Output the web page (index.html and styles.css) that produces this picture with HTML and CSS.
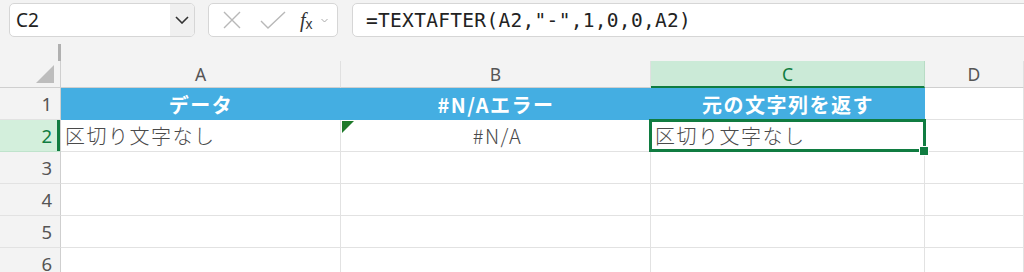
FILE: index.html
```html
<!DOCTYPE html>
<html lang="ja">
<head>
    <meta charset="UTF-8">
    <title>TEXTAFTER</title>
    <link rel="stylesheet" href="styles.css">
</head>
<body>
    <div class="toolbar">
        <div class="name-box">
            <span class="name-value">C2</span>
            <span class="name-drop">
                <svg width="14" height="8" viewBox="0 0 14 8"><path d="M1 1 L7 7 L13 1" fill="none" stroke="#333" stroke-width="1.6"/></svg>
            </span>
        </div>
        <div class="fx-box">
            <svg class="icon" width="20" height="20" viewBox="0 0 20 20"><path d="M2 2 L18 18 M18 2 L2 18" stroke="#b8b8b8" stroke-width="1.4" fill="none"/></svg>
            <svg class="icon" width="26" height="20" viewBox="0 0 26 20"><path d="M1 11 L8 18 L25 2" stroke="#b8b8b8" stroke-width="1.4" fill="none"/></svg>
            <span class="fx-label"><i>f</i><sub>x</sub></span>
            <svg class="small-chev" width="7" height="5" viewBox="0 0 7 5"><path d="M0.5 1 L3.5 4 L6.5 1" stroke="#aaa" stroke-width="1" fill="none"/></svg>
        </div>
        <div class="formula-box">=TEXTAFTER(A2,"-",1,0,0,A2)</div>
    </div>
    <div class="splitter-row">
        <span class="splitter"></span>
    </div>

    <div class="sheet">
        <div class="corner"><span class="corner-tri"></span></div>
        <div class="col-head">A</div>
        <div class="col-head">B</div>
        <div class="col-head active">C</div>
        <div class="col-head">D</div>

        <div class="row-head">1</div>
        <div class="cell title">データ</div>
        <div class="cell title">#N/Aエラー</div>
        <div class="cell title">元の文字列を返す</div>
        <div class="cell"></div>

        <div class="row-head active">2</div>
        <div class="cell">区切り文字なし</div>
        <div class="cell center error">#N/A</div>
        <div class="cell selected">区切り文字なし</div>
        <div class="cell"></div>

        <div class="row-head">3</div>
        <div class="cell"></div><div class="cell"></div><div class="cell"></div><div class="cell"></div>
        <div class="row-head">4</div>
        <div class="cell"></div><div class="cell"></div><div class="cell"></div><div class="cell"></div>
        <div class="row-head">5</div>
        <div class="cell"></div><div class="cell"></div><div class="cell"></div><div class="cell"></div>
        <div class="row-head">6</div>
        <div class="cell"></div><div class="cell"></div><div class="cell"></div><div class="cell"></div>
    </div>
</body>
</html>
```

FILE: styles.css
```css
* {
    margin: 0;
    padding: 0;
    box-sizing: border-box;
}

body {
    width: 1024px;
    height: 272px;
    overflow: hidden;
    background: #f3f3f3;
    font-family: "Noto Sans", "Noto Sans CJK JP", sans-serif;
    color: #444;
}

.toolbar {
    display: flex;
    align-items: stretch;
    height: 37px;
    padding: 3px 0 0 9px;
}

.name-box {
    display: flex;
    width: 186px;
    background: white;
    border: 1px solid #d6d6d6;
    border-radius: 5px;
    overflow: hidden;
}

.name-value {
    flex: 1;
    display: flex;
    align-items: center;
    padding-left: 6px;
    font-size: 19px;
    color: #222;
}

.name-drop {
    width: 24px;
    display: flex;
    align-items: center;
    justify-content: center;
    background: #f0f0f0;
}

.fx-box {
    display: flex;
    align-items: center;
    width: 130px;
    margin-left: 13px;
    padding-left: 13px;
    background: white;
    border: 1px solid #d6d6d6;
    border-radius: 5px;
}

.fx-box .icon {
    margin-right: 18px;
}

.fx-box .icon + .icon {
    margin-right: 14px;
}

.fx-label {
    font-family: "Liberation Serif", serif;
    font-size: 20px;
    color: #333;
    line-height: 1;
}

.fx-label sub {
    font-family: "Liberation Sans", sans-serif;
    font-size: 14px;
    vertical-align: -2px;
}

.small-chev {
    margin-left: 8px;
}

.formula-box {
    flex: 1;
    margin-left: 14px;
    margin-right: -10px;
    display: flex;
    align-items: center;
    padding-left: 13px;
    background: white;
    border: 1px solid #d6d6d6;
    border-radius: 5px;
    font-family: "DejaVu Sans Mono", "Liberation Mono", monospace;
    font-size: 19.5px;
    color: #222;
    letter-spacing: 0.3px;
}

.splitter-row {
    height: 24px;
    padding-top: 7px;
}

.splitter {
    display: block;
    margin-left: 58px;
    width: 3px;
    height: 17px;
    background: #b0b0b0;
}

.sheet {
    display: grid;
    grid-template-columns: 61px 280px 310px 274px 1fr;
    grid-template-rows: 27px repeat(6, 32px);
    background: white;
}

.corner {
    position: relative;
    background: #f3f3f3;
    border-right: 1px solid #cfcfcf;
    border-bottom: 1px solid #cfcfcf;
}

.corner-tri {
    position: absolute;
    right: 6px;
    bottom: 4px;
    width: 0;
    height: 0;
    border-left: 18px solid transparent;
    border-bottom: 18px solid #bdbdbd;
}

.col-head {
    display: flex;
    align-items: center;
    justify-content: center;
    background: #f3f3f3;
    border-right: 1px solid #e0e0e0;
    border-bottom: 1px solid #cfcfcf;
    font-size: 17.5px;
    color: #555;
}

.col-head.active {
    background: #cbead7;
    color: #107c41;
    border-right-color: #b8dcc5;
    border-bottom: 2px solid #107c41;
}

.row-head {
    display: flex;
    align-items: center;
    justify-content: flex-end;
    padding-right: 8px;
    background: #f3f3f3;
    border-right: 1px solid #cfcfcf;
    border-bottom: 1px solid #e2e2e2;
    font-size: 18.5px;
    color: #555;
}

.row-head.active {
    background: #d3efdc;
    color: #107c41;
    border-bottom-color: #bfe3cc;
    box-shadow: inset -3px 0 0 #107c41;
}

.cell {
    position: relative;
    display: flex;
    align-items: center;
    padding-left: 4px;
    border-right: 1px solid #e2e2e2;
    border-bottom: 1px solid #e2e2e2;
    font-family: "Noto Sans CJK JP", sans-serif;
    font-size: 20px;
    font-weight: 300;
    letter-spacing: 1.5px;
    color: #4a4a4a;
}

.cell.title {
    justify-content: center;
    padding-left: 0;
    background: #44aee2;
    border-right: none;
    border-bottom: none;
    color: white;
    font-weight: bold;
}

.cell.center {
    justify-content: center;
}

.cell.error::before {
    content: "";
    position: absolute;
    top: 1px;
    left: 1px;
    width: 0;
    height: 0;
    border-top: 12px solid #1e7a2a;
    border-right: 12px solid transparent;
}

.cell.selected::after {
    content: "";
    position: absolute;
    top: -1px;
    left: -2px;
    right: -2px;
    bottom: -1px;
    border: 3px solid #107c41;
}

.cell.selected::before {
    content: "";
    position: absolute;
    right: -5px;
    bottom: -5px;
    width: 8px;
    height: 8px;
    background: #107c41;
    border: 1px solid white;
    z-index: 1;
}
```
